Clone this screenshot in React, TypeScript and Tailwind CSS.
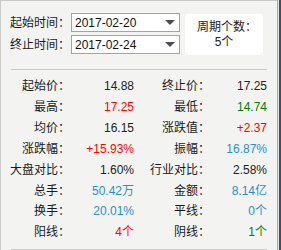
import React from 'react';

type Cell = { label: string; value: string; color?: string };

const rows: [Cell, Cell][] = [
  [{ label: '起始价：', value: '14.88' }, { label: '终止价：', value: '17.25' }],
  [{ label: '最高：', value: '17.25', color: 'text-[#ff0000]' }, { label: '最低：', value: '14.74', color: 'text-[#008000]' }],
  [{ label: '均价：', value: '16.15' }, { label: '涨跌值：', value: '+2.37', color: 'text-[#ff0000]' }],
  [{ label: '涨跌幅：', value: '+15.93%', color: 'text-[#ff0000]' }, { label: '振幅：', value: '16.87%', color: 'text-[#2a8dd4]' }],
  [{ label: '大盘对比：', value: '1.60%' }, { label: '行业对比：', value: '2.58%' }],
  [{ label: '总手：', value: '50.42万', color: 'text-[#2a8dd4]' }, { label: '金额：', value: '8.14亿', color: 'text-[#2a8dd4]' }],
  [{ label: '换手：', value: '20.01%', color: 'text-[#2a8dd4]' }, { label: '平线：', value: '0个', color: 'text-[#2a8dd4]' }],
  [{ label: '阳线：', value: '4个', color: 'text-[#ff0000]' }, { label: '阴线：', value: '1个', color: 'text-[#008000]' }],
];

const DateSelect = ({ value }: { value: string }) => (
  <div className="flex items-center w-[109px] h-[19px] bg-white border border-[#9ea4ab] pl-[3px] pr-[4px]">
    <span className="flex-1 text-[12px] text-[#111]">{value}</span>
    <svg width="10" height="5" viewBox="0 0 10 5">
      <path d="M0 0H10L5 5Z" fill="#4d4d4d" />
    </svg>
  </div>
);

export default function App() {
  return (
    <div className="flex w-[281px] h-[250px] font-['Liberation_Sans','Noto_Sans_CJK_SC',sans-serif]">
      <div className="w-[277px] h-full bg-[#f3f4f2] border-l border-t border-[#c9cac8] overflow-hidden">
        {/* Date range header */}
        <div className="flex pl-[9px] pt-[12px]">
          <div className="flex flex-col gap-[3px]">
            <div className="flex items-center">
              <span className="w-[61px] text-[12px] text-[#1a1a1a]">起始时间：</span>
              <DateSelect value="2017-02-20" />
            </div>
            <div className="flex items-center">
              <span className="w-[61px] text-[12px] text-[#1a1a1a]">终止时间：</span>
              <DateSelect value="2017-02-24" />
            </div>
          </div>
          <div className="ml-[5px] mt-[1px] w-[78px] h-[41px] bg-white rounded-[3px] flex flex-col items-center justify-center gap-[3px] text-[12px] text-[#1a1a1a] leading-none">
            <span className="pl-[6px]">周期个数：</span>
            <span>5个</span>
          </div>
        </div>

        <div className="mt-[14px] ml-[10px] w-[256px] h-px bg-[#c9cac8]" />

        {/* Stats */}
        <div className="pt-[6px] pl-[9px] text-[12px]">
          {rows.map(([a, b], i) => (
            <div key={i} className="flex items-center h-[20.85px]">
              <span className="w-[60px] text-right text-[#1a1a1a] whitespace-nowrap">{a.label}</span>
              <span className={`w-[64px] text-right ${a.color || 'text-[#222]'}`}>{a.value}</span>
              <span className="w-[16px]" />
              <span className="w-[60px] text-right text-[#1a1a1a] whitespace-nowrap">{b.label}</span>
              <span className={`w-[57px] text-right ${b.color || 'text-[#222]'}`}>{b.value}</span>
            </div>
          ))}
        </div>

        <div className="mt-[6px] ml-[10px] w-[256px] h-px bg-[#c9cac8]" />
      </div>
      <div className="w-px h-full bg-[#a9aaa8]" />
      <div className="w-px h-full bg-[#e6e7e5]" />
      <div className="w-[2px] h-full bg-[#33507d]" />
    </div>
  );
}
